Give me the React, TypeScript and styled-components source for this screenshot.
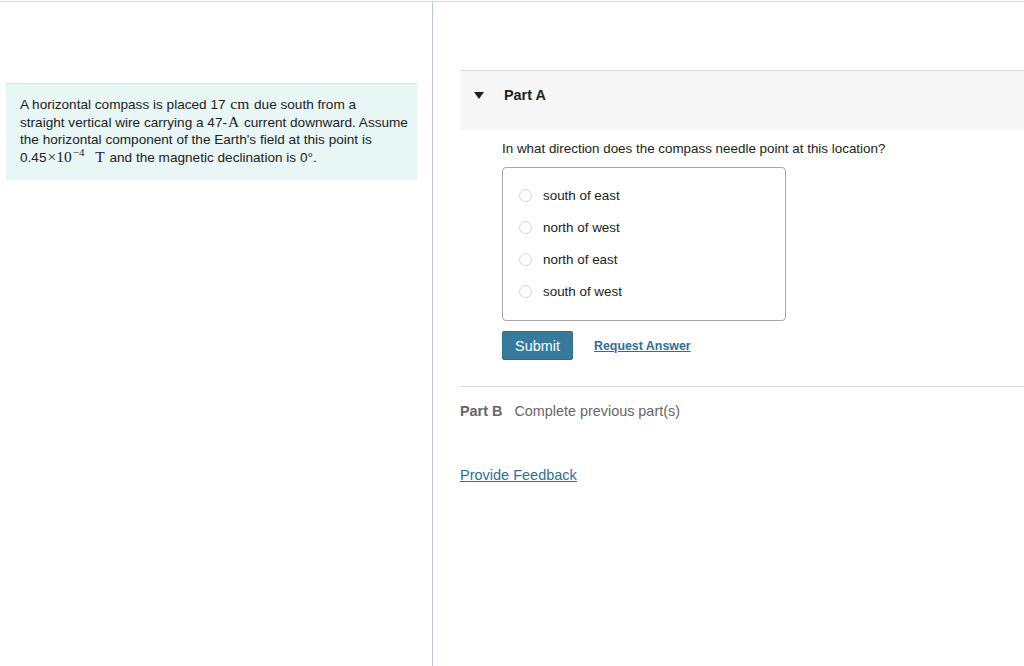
import * as React from 'react';
import styled, { createGlobalStyle } from 'styled-components';

const GlobalStyle = createGlobalStyle`
    html, body {
        margin: 0;
        padding: 0;
        background: #ffffff;
    }
    body {
        font-family: 'Liberation Sans', Arial, sans-serif;
        color: #222222;
    }
`;

const options = ['south of east', 'north of west', 'north of east', 'south of west'];

export default function App() {
    const [selected, setSelected] = React.useState<number | null>(null);

    return (
        <>
            <GlobalStyle />
            <Page>
                <LeftColumn>
                    <ProblemBox>
                        <Line>
                            A horizontal compass is placed 17 <MathText>cm</MathText> due south from a
                        </Line>
                        <Line>
                            straight vertical wire carrying a 47-<MathText>A</MathText> current downward. Assume
                        </Line>
                        <Line>the horizontal component of the Earth's field at this point is</Line>
                        <Line>
                            0.45<MathText>×10</MathText>
                            <Sup>−4</Sup> <MathText>T</MathText> and the magnetic declination is 0°.
                        </Line>
                    </ProblemBox>
                </LeftColumn>
                <RightColumn>
                    <PartHeader>
                        <Caret viewBox="0 0 10 7">
                            <path d="M0 0 L10 0 L5 7 Z" fill="#222" />
                        </Caret>
                        <PartTitle>Part A</PartTitle>
                    </PartHeader>
                    <PartBody>
                        <Question>In what direction does the compass needle point at this location?</Question>
                        <OptionBox>
                            {options.map((o, i) => (
                                <OptionRow key={o} onClick={() => setSelected(i)}>
                                    <Radio $checked={selected === i} />
                                    <OptionLabel>{o}</OptionLabel>
                                </OptionRow>
                            ))}
                        </OptionBox>
                        <ActionRow>
                            <SubmitButton>Submit</SubmitButton>
                            <RequestLink href="#">Request Answer</RequestLink>
                        </ActionRow>
                    </PartBody>
                    <PartBRow>
                        <PartBTitle>Part B</PartBTitle>
                        <PartBStatus>Complete previous part(s)</PartBStatus>
                    </PartBRow>
                    <FeedbackLink href="#">Provide Feedback</FeedbackLink>
                </RightColumn>
            </Page>
        </>
    );
}

const Page = styled.div`
    display: flex;
    min-height: 666px;
    border-top: 1px solid #dddddd;
    margin-top: 1px;
    box-sizing: border-box;
`;

const LeftColumn = styled.div`
    width: 433px;
    flex-shrink: 0;
    border-right: 1px solid #b3c5e0;
    padding: 81px 15px 0 6px;
    box-sizing: border-box;
`;

const ProblemBox = styled.div`
    background: #e8f6f6;
    border-top: 1px solid #e2e2e2;
    padding: 11px 6px 13px 14px;
    font-size: 13.6px;
    line-height: 17px;
    color: #222222;
`;

const Line = styled.span`
    display: block;
    white-space: nowrap;
`;

const MathText = styled.span`
    font-family: 'Liberation Serif', 'DejaVu Serif', serif;
    font-size: 15.5px;
    margin: 0 1px;
`;

const Sup = styled.span`
    font-family: 'Liberation Serif', 'DejaVu Serif', serif;
    font-size: 11px;
    position: relative;
    top: -6px;
    margin-right: 6px;
`;

const RightColumn = styled.div`
    flex: 1;
    padding-top: 68px;
    padding-left: 27px;
`;

const PartHeader = styled.div`
    display: flex;
    align-items: center;
    height: 60px;
    padding-bottom: 11px;
    box-sizing: border-box;
    background: #f7f7f7;
    border-top: 1px solid #dddddd;
    padding-left: 14px;
`;

const Caret = styled.svg`
    width: 10px;
    height: 7px;
    margin-right: 20px;
`;

const PartTitle = styled.span`
    font-size: 14.4px;
    font-weight: bold;
    color: #222222;
`;

const PartBody = styled.div`
    padding: 10px 0 0 42px;
`;

const Question = styled.div`
    font-size: 13.4px;
    line-height: 17px;
    color: #222222;
`;

const OptionBox = styled.div`
    margin-top: 10px;
    width: 284px;
    height: 154px;
    box-sizing: border-box;
    border: 1px solid #a8a8a8;
    border-radius: 4px;
    padding: 18px 0 0 16px;
    display: flex;
    flex-direction: column;
    gap: 14px;
`;

const OptionRow = styled.label`
    display: flex;
    align-items: center;
    height: 18px;
    cursor: pointer;
`;

const Radio = styled.span<{ $checked: boolean }>`
    width: 11px;
    height: 11px;
    border-radius: 50%;
    border: 1px solid #d6d6d6;
    background: ${p => (p.$checked ? '#357a9c' : '#ffffff')};
    margin-right: 11px;
`;

const OptionLabel = styled.span`
    font-size: 13.4px;
    color: #222222;
`;

const ActionRow = styled.div`
    display: flex;
    align-items: center;
    margin-top: 10px;
    gap: 21px;
`;

const SubmitButton = styled.button`
    width: 71px;
    height: 29px;
    background: #367a9d;
    border: 1px solid #2e6c8b;
    border-radius: 2px;
    color: #ffffff;
    font-family: 'Liberation Sans', Arial, sans-serif;
    font-size: 14.4px;
    padding: 0;
    cursor: pointer;
`;

const RequestLink = styled.a`
    font-size: 12.4px;
    font-weight: bold;
    color: #2d6f98;
    text-decoration: underline;
`;

const PartBRow = styled.div`
    margin-top: 26px;
    border-top: 1px solid #dddddd;
    padding-top: 16px;
    display: flex;
    gap: 12px;
    font-size: 14.4px;
    color: #666666;
`;

const PartBTitle = styled.span`
    font-weight: bold;
`;

const PartBStatus = styled.span``;

const FeedbackLink = styled.a`
    display: inline-block;
    margin-top: 48px;
    font-size: 14.5px;
    color: #2d6f98;
    text-decoration: underline;
`;
